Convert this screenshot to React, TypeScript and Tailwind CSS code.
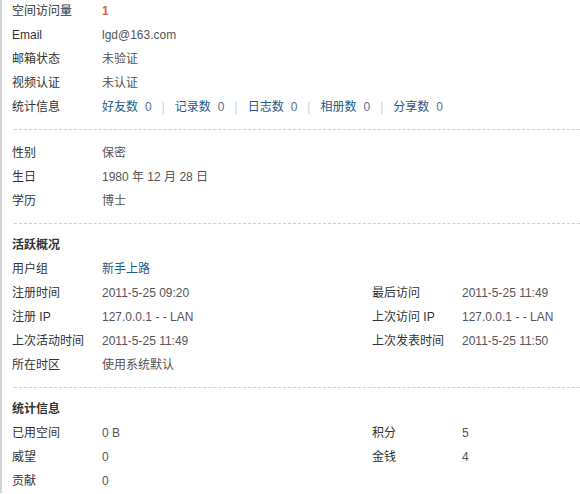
import React from "react";

const font = { fontFamily: '"Liberation Sans", "Noto Sans CJK SC", sans-serif' };

function Row({ label, children }: { label: React.ReactNode; children?: React.ReactNode }) {
  return (
    <div className="flex h-6 items-center">
      <div className="w-[90px] shrink-0 text-[#333]">{label}</div>
      <div className="text-[#555]">{children}</div>
    </div>
  );
}

function Dash() {
  return <div className="mb-[11px] ml-3 mt-[10px] border-t border-dashed border-[#cfcfcf]" />;
}

function Stat({ name, n, last }: { name: string; n: string; last?: boolean }) {
  return (
    <>
      <span className="text-[#1f5b8a]">{name}</span>
      <span className="ml-[7px] text-[#5a6f96]">{n}</span>
      {!last && <span className="mx-[10px] text-[#d0d0d0]">|</span>}
    </>
  );
}

function Pair({
  l1,
  v1,
  l2,
  v2,
}: {
  l1: React.ReactNode;
  v1: React.ReactNode;
  l2?: React.ReactNode;
  v2?: React.ReactNode;
}) {
  return (
    <div className="grid h-6 grid-cols-[90px_270px_90px_1fr] items-center">
      <div className="text-[#333]">{l1}</div>
      <div className="text-[#555]">{v1}</div>
      <div className="text-[#333]">{l2}</div>
      <div className="text-[#555]">{v2}</div>
    </div>
  );
}

export default function App() {
  return (
    <div
      className="h-[494px] w-[580px] overflow-hidden bg-white text-[12px] leading-none"
      style={font}
    >
      <div className="h-full border-l-2 border-[#d4d4d4]">
        <div className="-mt-[1px] pl-[10px]">
          <Row label="空间访问量">
            <span className="font-bold text-[#e0604a]">1</span>
          </Row>
          <Row label="Email">lgd@163.com</Row>
          <Row label="邮箱状态">未验证</Row>
          <Row label="视频认证">未认证</Row>
          <Row label="统计信息">
            <Stat name="好友数" n="0" />
            <Stat name="记录数" n="0" />
            <Stat name="日志数" n="0" />
            <Stat name="相册数" n="0" />
            <Stat name="分享数" n="0" last />
          </Row>
        </div>
        <Dash />
        <div className="pl-[10px]">
          <Row label="性别">保密</Row>
          <Row label="生日">1980 年 12 月 28 日</Row>
          <Row label="学历">博士</Row>
        </div>
        <Dash />
        <div className="pl-[10px]">
          <div className="flex h-5 items-center font-bold text-[#333]">活跃概况</div>
          <div className="mt-[2px]">
            <Pair l1="用户组" v1={<span className="text-[#1f5b8a]">新手上路</span>} />
            <Pair l1="注册时间" v1="2011-5-25 09:20" l2="最后访问" v2="2011-5-25 11:49" />
            <Pair l1="注册 IP" v1="127.0.0.1 - - LAN" l2="上次访问 IP" v2="127.0.0.1 - - LAN" />
            <Pair l1="上次活动时间" v1="2011-5-25 11:49" l2="上次发表时间" v2="2011-5-25 11:50" />
            <Pair l1="所在时区" v1="使用系统默认" />
          </div>
        </div>
        <Dash />
        <div className="pl-[10px]">
          <div className="flex h-5 items-center font-bold text-[#333]">统计信息</div>
          <div className="mt-[2px]">
            <Pair l1="已用空间" v1="0 B" l2="积分" v2="5" />
            <Pair l1="威望" v1="0" l2="金钱" v2="4" />
            <Pair l1="贡献" v1="0" />
          </div>
        </div>
      </div>
    </div>
  );
}
